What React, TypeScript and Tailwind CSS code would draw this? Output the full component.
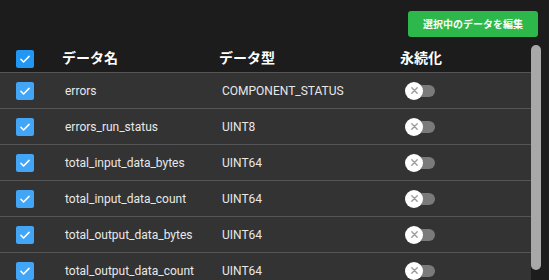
const rows = [
  { name: 'errors', type: 'COMPONENT_STATUS' },
  { name: 'errors_run_status', type: 'UINT8' },
  { name: 'total_input_data_bytes', type: 'UINT64' },
  { name: 'total_input_data_count', type: 'UINT64' },
  { name: 'total_output_data_bytes', type: 'UINT64' },
  { name: 'total_output_data_count', type: 'UINT64' },
];

function Check({ header }: { header?: boolean }) {
  return (
    <div
      className={`w-[18px] h-[18px] rounded-[2px] flex items-center justify-center ${
        header ? 'bg-[#2196f3]' : 'bg-[#42a5f5]'
      }`}
    >
      <svg width="14" height="14" viewBox="0 0 24 24" fill="none">
        <path d="M5 12.5l4.5 4.5L19 7.5" stroke="white" strokeWidth="2.6" strokeLinecap="round" strokeLinejoin="round" />
      </svg>
    </div>
  );
}

function Toggle() {
  return (
    <div className="relative w-[30px] h-[18px] ml-[5px] flex items-center">
      <div className="ml-[6px] w-[24px] h-[12px] rounded-full bg-[#7a7a7a]" />
      <div className="absolute left-0 top-0 w-[18px] h-[18px] rounded-full bg-white flex items-center justify-center">
        <svg width="9" height="9" viewBox="0 0 10 10">
          <path d="M2 2l6 6M8 2l-6 6" stroke="#9a9a9a" strokeWidth="1.5" strokeLinecap="round" />
        </svg>
      </div>
    </div>
  );
}

export default function App() {
  return (
    <div
      className="w-[549px] h-[280px] overflow-hidden bg-[#1c1c1c] flex flex-col"
      style={{ fontFamily: 'Roboto, "Noto Sans CJK JP", sans-serif' }}
    >
      <div className="flex justify-end pt-[11px] pr-[11px] h-[45px] shrink-0">
        <button className="h-[26px] px-[15px] rounded-[3px] bg-[#2db84c] text-white text-[10px] font-bold">
          選択中のデータを編集
        </button>
      </div>
      <div className="flex flex-1 min-h-0">
        <div className="w-[531px] flex flex-col">
          <div className="grid grid-cols-[62px_157px_181px_1fr] items-center h-[27px] shrink-0">
            <div className="pl-[16px]">
              <Check header />
            </div>
            <div className="text-white text-[14px] font-bold">データ名</div>
            <div className="text-white text-[14px] font-bold">データ型</div>
            <div className="text-white text-[14px] font-bold">永続化</div>
          </div>
          {rows.map((r) => (
            <div
              key={r.name}
              className="grid grid-cols-[62px_157px_181px_1fr] items-center h-[36px] shrink-0 bg-[#333333] border-t border-[#555555]"
            >
              <div className="pl-[16px]">
                <Check />
              </div>
              <div className="pl-[3px] text-[12px] text-[#e8e8e8]">{r.name}</div>
              <div className="pl-[3px] text-[12px] text-[#e8e8e8]">{r.type}</div>
              <div>
                <Toggle />
              </div>
            </div>
          ))}
        </div>
        <div className="w-[10px] flex flex-col">
          <div className="h-[225px] rounded-full bg-[#a8a8a8]" />
        </div>
      </div>
    </div>
  );
}
